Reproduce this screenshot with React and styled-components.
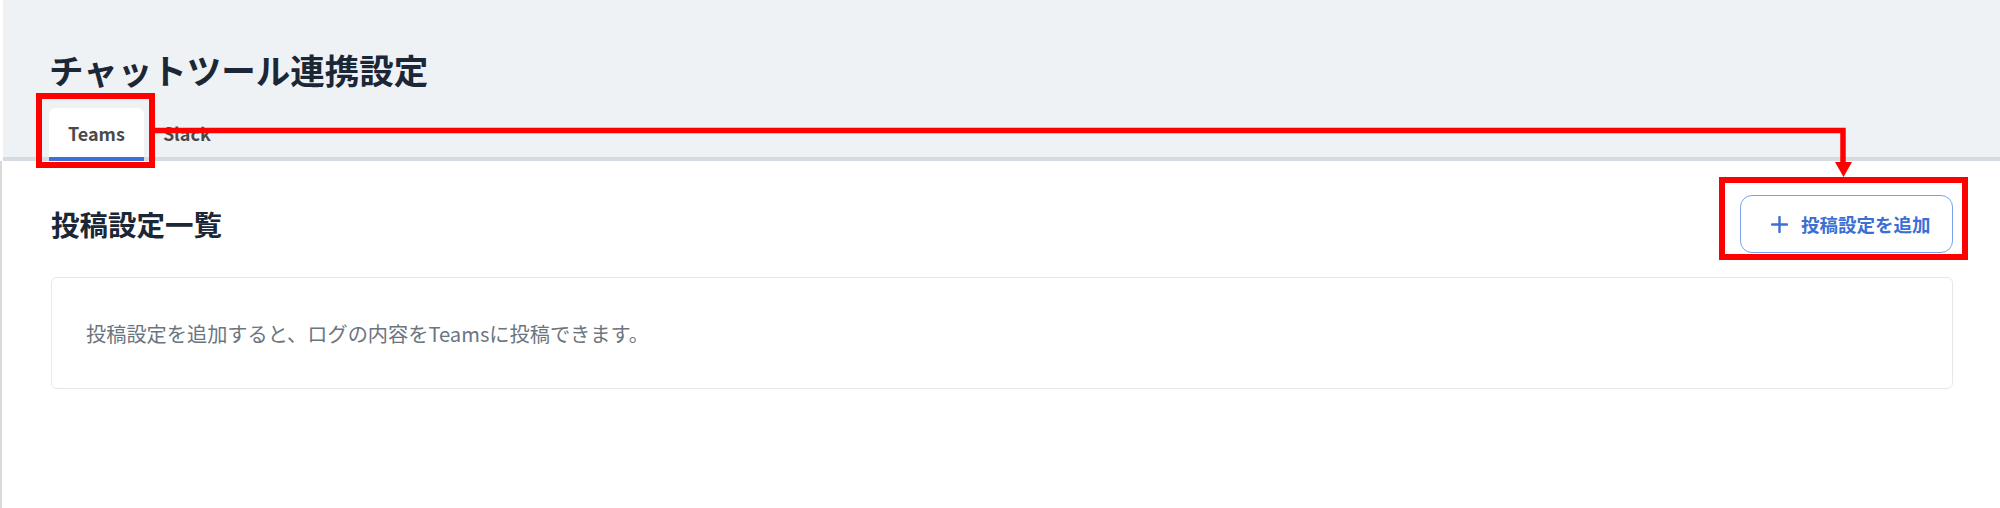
import styled, { createGlobalStyle } from "styled-components";

const GlobalStyle = createGlobalStyle`
    html, body {
        margin: 0;
        padding: 0;
        background: #ffffff;
    }
    * {
        box-sizing: border-box;
    }
`;

const FONT = `"Noto Sans CJK JP", "Noto Sans", sans-serif`;

const PlusIcon = () => (
    <svg width="17" height="17" viewBox="0 0 17 17" fill="none">
        <path
            d="M8.5 1v15M1 8.5h15"
            stroke="#3b6fd6"
            strokeWidth="2.4"
            strokeLinecap="round"
        />
    </svg>
);

// 赤い注釈 (スクリーンショット上のマーカー)
const Annotation = () => (
    <SOverlay width="2000" height="508" viewBox="0 0 2000 508">
        <rect x="39" y="96" width="113" height="69" fill="none" stroke="#ff0000" strokeWidth="6" />
        <path d="M155 130.5 H1843 V163" fill="none" stroke="#ff0000" strokeWidth="5.5" />
        <polygon points="1835,162 1852,162 1843.5,177" fill="#ff0000" />
        <rect x="1722" y="180" width="243" height="77" fill="none" stroke="#ff0000" strokeWidth="6" />
    </SOverlay>
);

const App = () => (
    <SPage>
        <GlobalStyle />
        <SHeader>
            <PageTitle>チャットツール連携設定</PageTitle>
            <TabBar>
                <Tab $active>Teams</Tab>
                <Tab>Slack</Tab>
            </TabBar>
        </SHeader>

        <SMain>
            <SectionRow>
                <SectionTitle>投稿設定一覧</SectionTitle>
                <AddButton type="button">
                    <PlusIcon />
                    投稿設定を追加
                </AddButton>
            </SectionRow>

            <EmptyCard>
                <EmptyText>
                    投稿設定を追加すると、ログの内容をTeamsに投稿できます。
                </EmptyText>
            </EmptyCard>
        </SMain>

        <Annotation />
    </SPage>
);

export default App;

const SPage = styled.div`
    position: relative;
    width: 2000px;
    height: 508px;
    overflow: hidden;
    background: #ffffff;
    font-family: ${FONT};
`;

const SHeader = styled.header`
    margin-left: 3px;
    padding: 45px 0 0 46px;
    background: #eff2f5;
    border-bottom: 4px solid #d5dbe2;
`;

const PageTitle = styled.h1`
    margin: 0;
    font-weight: 700;
    font-size: 34.5px;
    line-height: 49px;
    color: #1b2736;
`;

const TabBar = styled.nav`
    display: flex;
    margin-top: 14px;
    margin-bottom: -4px;
`;

const Tab = styled.div`
    height: 53px;
    padding: 0 19px;
    display: flex;
    align-items: center;
    font-weight: 700;
    font-size: 18px;
    color: #4a4a4a;
    border-radius: 6px 6px 0 0;
    background: ${({ $active }) => ($active ? "#ffffff" : "transparent")};
    border-bottom: 4px solid
        ${({ $active }) => ($active ? "#3c6fd8" : "transparent")};
`;

const SMain = styled.main`
    height: 347px;
    border-left: 2px solid #d9d9d9;
    padding: 34px 47px 0 49px;
`;

const SectionRow = styled.div`
    display: flex;
    align-items: center;
    justify-content: space-between;
`;

const SectionTitle = styled.h2`
    margin: 0;
    font-weight: 700;
    font-size: 28.5px;
    line-height: 40px;
    color: #1b2736;
`;

const AddButton = styled.button`
    width: 213px;
    height: 58px;
    padding: 0 0 0 30px;
    display: flex;
    align-items: center;
    gap: 13px;
    background: #ffffff;
    border: 1.5px solid #7aa1ea;
    border-radius: 12px;
    font-family: ${FONT};
    font-weight: 700;
    font-size: 18.5px;
    color: #3b6fd6;
    cursor: pointer;
`;

const EmptyCard = styled.div`
    margin-top: 24px;
    height: 112px;
    padding-left: 34px;
    display: flex;
    align-items: center;
    border: 1.5px solid #e4e8ed;
    border-radius: 6px;
`;

const EmptyText = styled.p`
    margin: 0;
    font-weight: 400;
    font-size: 20.2px;
    color: #6b7580;
`;

const SOverlay = styled.svg`
    position: absolute;
    top: 0;
    left: 0;
    pointer-events: none;
`;
